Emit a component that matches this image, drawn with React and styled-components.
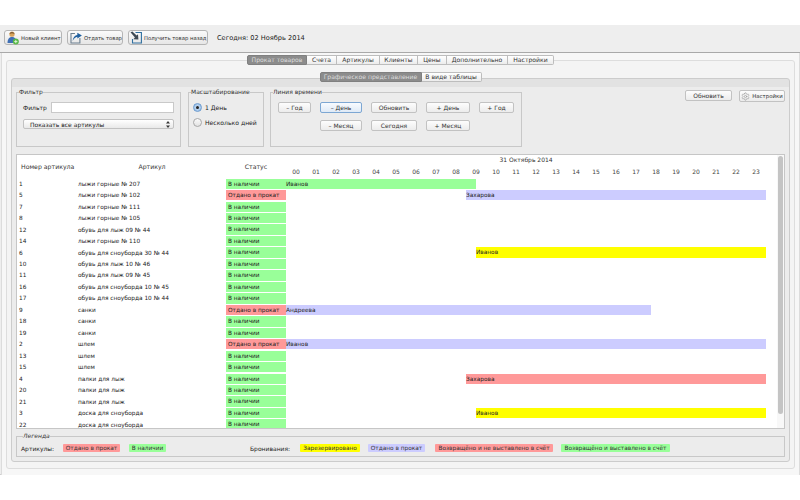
import React from 'react'
import styled, { createGlobalStyle } from 'styled-components'
import { Settings } from 'lucide-react'

const Global = createGlobalStyle`
    html, body { margin: 0; padding: 0; background: #fff; }
    body { font-family: "DejaVu Sans", "Liberation Sans", sans-serif; color: #222; }
    * { box-sizing: border-box; }
`

const Page = styled.div`
    width: 800px;
    height: 500px;
    padding-top: 25px;
    overflow: hidden;
    white-space: nowrap;
`
const Win = styled.div`
    height: 450px;
    background: #eeeeee;
    border-bottom: 1px solid #cfcfcf;
    display: flex;
    flex-direction: column;
`
const Toolbar = styled.div`
    height: 28px;
    flex: none;
    display: flex;
    align-items: center;
    padding: 0 0 2px 4px;
    gap: 5px;
    border-bottom: 1px solid #a9a9a9;
`
const ToolButton = styled.div`
    width: ${p => p.$w}px;
    height: 15px;
    display: flex;
    align-items: center;
    gap: 2px;
    padding-left: ${p => p.$pad ?? 2}px;
    font-size: 5.3px;
    color: #333;
    background: linear-gradient(#fbfbfb, #e6e6e6);
    border: 1px solid #b5b5b5;
    border-radius: 3px;
`
const Today = styled.div`
    margin-left: 4px;
    font-size: 6.6px;
    color: #222;
`
const Content = styled.div`
    flex: 1;
    margin: 0 0 0 1px;
    padding: 7px 4px 6px 4px;
    background: #f7f7f7;
    border-left: 1px solid #dcdcdc;
    border-right: 1px solid #dcdcdc;
    display: flex;
`
const OuterPanel = styled.div`
    flex: 1;
    display: flex;
    flex-direction: column;
    background: #f4f4f4;
    border: 1px solid #dddddd;
    border-radius: 3px;
    padding: 0 4px 6px 4px;
`
const TabBar = styled.div`
    display: flex;
    justify-content: center;
    flex: none;
    height: 10px;
    margin-top: ${p => p.$top}px;
    position: relative;
    z-index: 1;
`
const Tab = styled.div`
    width: ${p => p.$w}px;
    height: 10px;
    line-height: 8.5px;
    text-align: center;
    font-size: 6.1px;
    color: ${p => (p.$on ? '#dedede' : '#333')};
    background: ${p => (p.$on ? '#8c8c8c' : 'linear-gradient(#ffffff, #ececec)')};
    border: 1px solid ${p => (p.$on ? '#808080' : '#bdbdbd')};
    border-left-width: ${p => (p.$first ? 1 : 0)}px;
    border-radius: ${p => (p.$first ? '2px 0 0 2px' : p.$last ? '0 2px 2px 0' : '0')};
`
const InnerPanel = styled.div`
    flex: 1;
    margin-top: -4px;
    display: flex;
    flex-direction: column;
    background: linear-gradient(#e2e2e2 0, #e2e2e2 8px, #ececec 8px);
    border: 1px solid #cccccc;
    border-radius: 3px;
    padding: 0 4px 4px 4px;
`
const Controls = styled.div`
    display: flex;
    height: 75px;
    padding-top: 9px;
    flex: none;
`
const Group = styled.fieldset`
    margin: 0 ${p => p.$gap}px 0 0;
    padding: 0;
    width: ${p => p.$w}px;
    height: 59px;
    border: 1px solid #c8c8c8;
    min-inline-size: 0;
`
const GroupTitle = styled.legend`
    padding: 0;
    margin-left: 2px;
    font-size: 6px;
    line-height: 8px;
    color: #333;
    font-style: ${p => (p.$italic ? 'italic' : 'normal')};
`
const FilterBody = styled.div`
    padding: 6px 6px 0 6px;
    display: flex;
    flex-direction: column;
    gap: 6px;
`
const FilterLine = styled.div`
    display: flex;
    align-items: center;
    justify-content: space-between;
    font-size: 6px;
`
const FilterInput = styled.div`
    width: 123px;
    height: 11px;
    background: #fff;
    border: 1px solid #c9c9c9;
`
const Select = styled.div`
    height: 10px;
    display: flex;
    align-items: center;
    justify-content: space-between;
    padding: 0 3px 0 6px;
    font-size: 6px;
    background: linear-gradient(#ffffff, #e9e9e9);
    border: 1px solid #c2c2c2;
    border-radius: 2px;
`
const RadioList = styled.div`
    padding: 7px 0 0 4px;
    display: flex;
    flex-direction: column;
    gap: 5.5px;
`
const RadioLine = styled.div`
    display: flex;
    align-items: center;
    gap: 3px;
    height: 9px;
    font-size: 6.1px;
`
const RadioDot = styled.span`
    width: 9px;
    height: 9px;
    border-radius: 50%;
    display: flex;
    align-items: center;
    justify-content: center;
    background: ${p => (p.$on ? 'radial-gradient(#cfe3f7, #8fb8e4)' : 'linear-gradient(#fafafa, #e2e2e2)')};
    border: 1px solid ${p => (p.$on ? '#6d9ccf' : '#a8a8a8')};
    &::after {
        content: '';
        display: ${p => (p.$on ? 'block' : 'none')};
        width: 3px;
        height: 3px;
        border-radius: 50%;
        background: #222;
    }
`
const TimeGrid = styled.div`
    padding: 6px 0 0 7px;
    display: grid;
    grid-template-columns: 33px 42px 46px 44px 35px;
    grid-template-rows: 11px 11px;
    column-gap: 9px;
    row-gap: 7px;
`
const Btn = styled.div`
    grid-column: ${p => p.$col || 'auto'};
    width: ${p => (p.$w ? `${p.$w}px` : 'auto')};
    height: ${p => p.$h || 11}px;
    display: flex;
    align-items: center;
    justify-content: center;
    gap: 2px;
    font-size: 6px;
    color: #333;
    background: ${p => (p.$focus ? 'linear-gradient(#f8fbff, #dfeaf6)' : 'linear-gradient(#fdfdfd, #ececec)')};
    border: 1px solid ${p => (p.$focus ? '#7da7d3' : '#c2c2c2')};
    border-radius: 2px;
`
const SideButtons = styled.div`
    margin-left: auto;
    margin-top: 2px;
    display: flex;
    gap: 7px;
    height: 12px;
`
const SmallLabel = styled.span`
    font-size: 5.4px;
`
const Table = styled.div`
    height: 275px;
    flex: none;
    position: relative;
    overflow: hidden;
    background: #fff;
    border: 1px solid #c6c6c6;
`
const HeadRow = styled.div`
    height: 23px;
    display: flex;
    font-size: 6.2px;
    color: #333;
`
const HeadCell = styled.div`
    width: ${p => p.$w}px;
    padding: 8px 0 0 ${p => p.$pad || 0}px;
    text-align: ${p => (p.$center ? 'center' : 'left')};
`
const HeadTime = styled.div`
    width: 480px;
    display: flex;
    flex-direction: column;
`
const HeadDate = styled.div`
    height: 13px;
    padding-top: 1px;
    text-align: center;
    font-size: 6px;
`
const Hours = styled.div`
    display: flex;
`
const Hour = styled.div`
    width: 20px;
    text-align: center;
    font-size: 6px;
    color: #444;
`
const Row = styled.div`
    height: 11.47px;
    display: flex;
    align-items: center;
    font-size: 5.8px;
    color: #222;
`
const NumCell = styled.div`
    width: 61px;
    padding-left: 2px;
`
const NameCell = styled.div`
    width: 148px;
`
const StatusCell = styled.div`
    width: 60px;
    height: 10.3px;
    line-height: 10px;
    padding-left: 2px;
    background: ${p => p.$bg};
`
const Timeline = styled.div`
    width: 480px;
    height: 10.3px;
    display: flex;
`
const Bar = styled.div`
    margin-left: ${p => p.$from * 20}px;
    width: ${p => (p.$to - p.$from) * 20}px;
    line-height: 10px;
    background: ${p => p.$bg};
`
const Scrollbar = styled.div`
    position: absolute;
    top: 0;
    right: 0;
    bottom: 0;
    width: 7px;
    background: #f8f8f8;
    &::after {
        content: '';
        position: absolute;
        top: 1px;
        left: 1px;
        width: 5px;
        height: 258px;
        border-radius: 3px;
        background: #c4c4c4;
    }
`
const Legend = styled.fieldset`
    margin: 3px 0 0 0;
    padding: 4px 0 0 4px;
    height: 25px;
    flex: none;
    font-size: 6px;
    border: 1px solid #c8c8c8;
    min-inline-size: 0;
`
const LegendRow = styled.div`
    display: flex;
    align-items: center;
    height: 8px;
`
const LegendLabel = styled.span`
    width: ${p => p.$w}px;
    flex: none;
`
const Chip = styled.span`
    height: 8px;
    line-height: 8px;
    width: ${p => p.$w}px;
    margin-right: ${p => p.$gap}px;
    flex: none;
    text-align: center;
    font-size: 5.8px;
    border-radius: 1px;
    color: #333;
    background: ${p => p.$bg};
`

const GREEN = '#99ff99'
const RED = '#ff9999'
const BLUE = '#ccccff'
const YELLOW = '#ffff00'

const hours = Array.from({ length: 24 }, (_, i) => String(i).padStart(2, '0'))

const items = [
    { n: 1, name: 'лыжи горные № 207', bar: { from: 0, to: 9.5, bg: GREEN, who: 'Иванов' } },
    { n: 5, name: 'лыжи горные № 102', out: true, bar: { from: 9, to: 24, bg: BLUE, who: 'Захарова' } },
    { n: 7, name: 'лыжи горные № 111' },
    { n: 8, name: 'лыжи горные № 105' },
    { n: 12, name: 'обувь для лыж 09 № 44' },
    { n: 14, name: 'лыжи горные № 110' },
    { n: 6, name: 'обувь для сноуборда 30 № 44', bar: { from: 9.5, to: 24, bg: YELLOW, who: 'Иванов' } },
    { n: 10, name: 'обувь для лыж 10 № 46' },
    { n: 11, name: 'обувь для лыж 09 № 45' },
    { n: 16, name: 'обувь для сноуборда 10 № 45' },
    { n: 17, name: 'обувь для сноуборда 10 № 44' },
    { n: 9, name: 'санки', out: true, bar: { from: 0, to: 18.25, bg: BLUE, who: 'Андреева' } },
    { n: 18, name: 'санки' },
    { n: 19, name: 'санки' },
    { n: 2, name: 'шлем', out: true, bar: { from: 0, to: 24, bg: BLUE, who: 'Иванов' } },
    { n: 13, name: 'шлем' },
    { n: 15, name: 'шлем' },
    { n: 4, name: 'палки для лыж', bar: { from: 9, to: 24, bg: RED, who: 'Захарова' } },
    { n: 20, name: 'палки для лыж' },
    { n: 21, name: 'палки для лыж' },
    { n: 3, name: 'доска для сноуборда', bar: { from: 9.5, to: 24, bg: YELLOW, who: 'Иванов' } },
    { n: 22, name: 'доска для сноуборда' },
]

const ClientIcon = () => (
    <svg width="12" height="14" viewBox="0 0 12 14">
        <circle cx="5" cy="3.2" r="2.6" fill="#d9a45c" />
        <path d="M2.4 2.8 C2.6 0.6 7.4 0.6 7.6 2.8 C6 1.9 4 1.9 2.4 2.8 Z" fill="#6a4a2a" />
        <path d="M0.5 12 C0.5 7.6 2.6 6 5 6 C7.4 6 9.5 7.6 9.5 12 Z" fill="#3f6fb5" />
        <circle cx="8.8" cy="10.6" r="3" fill="#58b848" />
        <path d="M8.8 9 V12.2 M7.2 10.6 H10.4" stroke="#e8f8e0" strokeWidth="0.9" />
    </svg>
)

const GiveIcon = () => (
    <svg width="12" height="13" viewBox="0 0 12 13">
        <path d="M5 2.5 H1 V12 H10 V7" fill="none" stroke="#6b7f90" strokeWidth="1.1" />
        <path d="M2.6 10 C3 6.6 5 4.4 7.4 4 V1.6 L12 4.6 L7.4 7.6 V5.8 C5.6 6 4 7.6 2.6 10 Z" fill="#1f5f9f" />
    </svg>
)

const BackIcon = () => (
    <svg width="12" height="13" viewBox="0 0 12 13">
        <path d="M5.5 1.5 H11.4 V12 H2.5 V8" fill="none" stroke="#2f6f9f" strokeWidth="1.1" />
        <path d="M0.5 1.2 L2.4 0.6 L6.6 4.6 L8 3.2 L8.4 8.4 L3.4 8.2 L4.9 6.6 Z" fill="#3f4a55" />
    </svg>
)

const UpDown = () => (
    <svg width="4" height="7" viewBox="0 0 4 7">
        <path d="M2 0 L4 2.6 H0 Z M2 7 L4 4.4 H0 Z" fill="#333" />
    </svg>
)

const App = () => {
    return (
        <Page>
            <Global />
            <Win>
                <Toolbar>
                    <ToolButton $w={58}><ClientIcon />Новый клиент</ToolButton>
                    <ToolButton $w={56}><GiveIcon />Отдать товар</ToolButton>
                    <ToolButton $w={80} $pad={1}><BackIcon />Получить товар назад</ToolButton>
                    <Today>Сегодня: 02 Ноябрь 2014</Today>
                </Toolbar>
                <Content>
                    <OuterPanel>
                        <TabBar $top={-6}>
                            <Tab $w={60} $on $first>Прокат товаров</Tab>
                            <Tab $w={30}>Счета</Tab>
                            <Tab $w={43}>Артикулы</Tab>
                            <Tab $w={38}>Клиенты</Tab>
                            <Tab $w={29}>Цены</Tab>
                            <Tab $w={61}>Дополнительно</Tab>
                            <Tab $w={46} $last>Настройки</Tab>
                        </TabBar>
                        <TabBar $top={7}>
                            <Tab $w={102} $on $first>Графическое представление</Tab>
                            <Tab $w={60} $last>В виде таблицы</Tab>
                        </TabBar>
                        <InnerPanel>
                            <Controls>
                                <Group $w={165} $gap={7}>
                                    <GroupTitle>Фильтр</GroupTitle>
                                    <FilterBody>
                                        <FilterLine>Фильтр<FilterInput /></FilterLine>
                                        <Select>Показать все артикулы<UpDown /></Select>
                                    </FilterBody>
                                </Group>
                                <Group $w={76} $gap={6}>
                                    <GroupTitle>Масштабирование</GroupTitle>
                                    <RadioList>
                                        <RadioLine><RadioDot $on />1 День</RadioLine>
                                        <RadioLine><RadioDot />Несколько дней</RadioLine>
                                    </RadioList>
                                </Group>
                                <Group $w={252} $gap={0}>
                                    <GroupTitle>Линия времени</GroupTitle>
                                    <TimeGrid>
                                        <Btn>– Год</Btn>
                                        <Btn $focus>– День</Btn>
                                        <Btn>Обновить</Btn>
                                        <Btn>+ День</Btn>
                                        <Btn>+ Год</Btn>
                                        <Btn $col="2">– Месяц</Btn>
                                        <Btn>Сегодня</Btn>
                                        <Btn>+ Месяц</Btn>
                                    </TimeGrid>
                                </Group>
                                <SideButtons>
                                    <Btn $w={47}>Обновить</Btn>
                                    <Btn $w={46} $h={12}>
                                        <Settings size={9} color="#a0a0a0" />
                                        <SmallLabel>Настройки</SmallLabel>
                                    </Btn>
                                </SideButtons>
                            </Controls>
                            <Table>
                                <HeadRow>
                                    <HeadCell $w={61} $pad={4}>Номер артикула</HeadCell>
                                    <HeadCell $w={148} $center>Артикул</HeadCell>
                                    <HeadCell $w={60} $center>Статус</HeadCell>
                                    <HeadTime>
                                        <HeadDate>31 Октябрь 2014</HeadDate>
                                        <Hours>
                                            {hours.map(h => <Hour key={h}>{h}</Hour>)}
                                        </Hours>
                                    </HeadTime>
                                </HeadRow>
                                {items.map(item => (
                                    <Row key={item.n}>
                                        <NumCell>{item.n}</NumCell>
                                        <NameCell>{item.name}</NameCell>
                                        <StatusCell $bg={item.out ? RED : GREEN}>
                                            {item.out ? 'Отдано в прокат' : 'В наличии'}
                                        </StatusCell>
                                        <Timeline>
                                            {item.bar && (
                                                <Bar $from={item.bar.from} $to={item.bar.to} $bg={item.bar.bg}>
                                                    {item.bar.who}
                                                </Bar>
                                            )}
                                        </Timeline>
                                    </Row>
                                ))}
                                <Scrollbar />
                            </Table>
                            <Legend>
                                <GroupTitle $italic>Легенда</GroupTitle>
                                <LegendRow>
                                    <LegendLabel $w={42}>Артикулы:</LegendLabel>
                                    <Chip $w={57} $gap={9} $bg={RED}>Отдано в прокат</Chip>
                                    <Chip $w={37} $gap={84} $bg={GREEN}>В наличии</Chip>
                                    <LegendLabel $w={50}>Бронивания:</LegendLabel>
                                    <Chip $w={60} $gap={8} $bg={YELLOW}>Зарезервировано</Chip>
                                    <Chip $w={57} $gap={10} $bg={BLUE}>Отдано в прокат</Chip>
                                    <Chip $w={118} $gap={8} $bg={RED}>Возвращёно и не выставлено в счёт</Chip>
                                    <Chip $w={109} $gap={0} $bg={GREEN}>Возвращёно и выставлено в счёт</Chip>
                                </LegendRow>
                            </Legend>
                        </InnerPanel>
                    </OuterPanel>
                </Content>
            </Win>
        </Page>
    )
}

export default App
